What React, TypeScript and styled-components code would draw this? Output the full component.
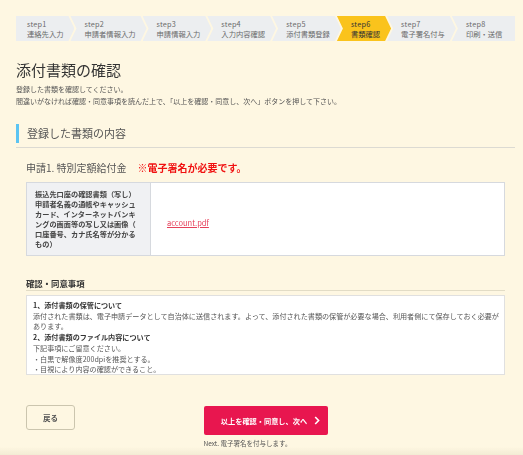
import React from 'react';
import styled, { createGlobalStyle } from 'styled-components';

const GlobalStyle = createGlobalStyle`
  html, body {
    margin: 0;
    padding: 0;
    background: #fef7e2;
  }
  body {
    font-family: "Noto Sans CJK JP", "Noto Sans", sans-serif;
    color: #555;
  }
  * {
    box-sizing: border-box;
  }
`;

type Step = { no: number; label: string };

const steps: Step[] = [
  { no: 1, label: '連絡先入力' },
  { no: 2, label: '申請者情報入力' },
  { no: 3, label: '申請情報入力' },
  { no: 4, label: '入力内容確認' },
  { no: 5, label: '添付書類登録' },
  { no: 6, label: '書類確認' },
  { no: 7, label: '電子署名付与' },
  { no: 8, label: '印刷・送信' },
];

const CURRENT_STEP = 6;

// 確認・同意事項の本文。heading は太字で表示する。
const agreement: { heading?: string; lines: string[] }[] = [
  {
    heading: '1、添付書類の保管について',
    lines: [
      '添付された書類は、電子申請データとして自治体に送信されます。よって、添付された書類の保管が必要な場合、利用者側にて保存しておく必要があります。',
    ],
  },
  {
    heading: '2、添付書類のファイル内容について',
    lines: [
      '下記事項にご留意ください。',
      '・白黒で解像度200dpiを推奨とする。',
      '・目視により内容の確認ができること。',
      '・ファイルの形式はPDF、JPEG、PNGのいずれかとする。',
      '・1ファイルあたりの容量は10MB以内とする。',
    ],
  },
  {
    heading: '3、電子署名について',
    lines: [
      '次の画面で、マイナンバーカードを用いて電子署名を付与します。',
      'カードリーダーまたは対応スマートフォンをご用意ください。',
      '署名用電子証明書の暗証番号（英数字6文字以上16文字以下）が必要です。',
    ],
  },
  {
    heading: '4、申請内容の変更について',
    lines: [
      '電子署名を付与した後は、申請内容および添付書類を変更することはできません。',
      '内容に誤りがある場合は、「戻る」ボタンで前の画面に戻り修正してください。',
    ],
  },
  {
    heading: '5、個人情報の取り扱いについて',
    lines: [
      '入力された個人情報は、給付金の支給事務以外の目的には使用しません。',
      '法令に基づく場合を除き、本人の同意なく第三者に提供することはありません。',
    ],
  },
];

export default function App() {
  return (
    <>
      <GlobalStyle />
      <Page>
        <StepBar>
          {steps.map((step, idx) => (
            <StepItem
              key={step.no}
              $first={idx === 0}
              $last={idx === steps.length - 1}
              $active={step.no === CURRENT_STEP}>
              <StepNo>step{step.no}</StepNo>
              <StepLabel>{step.label}</StepLabel>
            </StepItem>
          ))}
        </StepBar>

        <Title>添付書類の確認</Title>
        <Lead>
          登録した書類を確認してください。
          <br />
          間違いがなければ確認・同意事項を読んだ上で、「以上を確認・同意し、次へ」ボタンを押して下さい。
        </Lead>

        <SectionHead>
          <SectionTitle>登録した書類の内容</SectionTitle>
        </SectionHead>

        <Inner>
          <Application>
            申請1. 特別定額給付金
            <Required>※電子署名が必要です。</Required>
          </Application>

          <DocTable>
            <tbody>
              <tr>
                <DocName>
                  振込先口座の確認書類（写し）
                  <br />
                  申請者名義の通帳やキャッシュ
                  <br />
                  カード、インターネットバンキ
                  <br />
                  ングの画面等の写し又は画像（
                  <br />
                  口座番号、カナ氏名等が分かる
                  <br />
                  もの）
                </DocName>
                <DocFile>
                  <FileLink href="#">account.pdf</FileLink>
                </DocFile>
              </tr>
            </tbody>
          </DocTable>

          <AgreeHead>確認・同意事項</AgreeHead>
          <AgreeBox>
            {agreement.map((block, idx) => (
              <React.Fragment key={idx}>
                {block.heading && <AgreeTitle>{block.heading}</AgreeTitle>}
                {block.lines.map((line) => (
                  <AgreeLine key={line}>{line}</AgreeLine>
                ))}
              </React.Fragment>
            ))}
          </AgreeBox>

          <Actions>
            <BackButton type="button">戻る</BackButton>
            <NextColumn>
              <NextButton type="button">
                以上を確認・同意し、次へ
                <svg width="6" height="9" viewBox="0 0 6 9" aria-hidden>
                  <polyline
                    points="1.2,1 4.6,4.5 1.2,8"
                    fill="none"
                    stroke="#fff"
                    strokeWidth="1.6"
                  />
                </svg>
              </NextButton>
              <NextNote>Next. 電子署名を付与します。</NextNote>
            </NextColumn>
            <span />
          </Actions>
        </Inner>
      </Page>
      <BottomShade />
    </>
  );
}

const Page = styled.div`
  width: 499px;
  margin-left: 16px;
  padding-top: 16px;
  padding-bottom: 8px;
`;

const StepBar = styled.ol`
  display: flex;
  margin: 0;
  padding: 0;
  list-style: none;
  height: 25px;
`;

const StepItem = styled.li<{ $first: boolean; $last: boolean; $active: boolean }>`
  display: flex;
  flex-direction: column;
  justify-content: center;
  height: 25px;
  padding: 0 11px 0 ${({ $first }) => ($first ? '11px' : '14px')};
  margin-left: ${({ $first }) => ($first ? '0' : '-4px')};
  flex: ${({ $last }) => ($last ? '1' : 'none')};
  background: ${({ $active }) => ($active ? '#fac31c' : '#eceef0')};
  color: ${({ $active }) => ($active ? '#333' : '#6a6a6a')};
  clip-path: ${({ $first, $last }) =>
    $first
      ? 'polygon(0 0, calc(100% - 6px) 0, 100% 50%, calc(100% - 6px) 100%, 0 100%)'
      : $last
        ? 'polygon(0 0, 100% 0, 100% 100%, 0 100%, 6px 50%)'
        : 'polygon(0 0, calc(100% - 6px) 0, 100% 50%, calc(100% - 6px) 100%, 0 100%, 6px 50%)'};
`;

const StepNo = styled.span`
  font-size: 7.3px;
  line-height: 10px;
  letter-spacing: 0.2px;
`;

const StepLabel = styled.span`
  font-size: 7.3px;
  line-height: 10px;
  white-space: nowrap;
`;

const Title = styled.h1`
  margin: 19px 0 0;
  font-size: 15px;
  line-height: 20px;
  font-weight: 400;
  color: #333;
`;

const Lead = styled.p`
  margin: 4px 0 0;
  font-size: 7px;
  line-height: 11.5px;
  color: #555;
`;

const SectionHead = styled.div`
  margin-top: 17px;
  padding-bottom: 4px;
  border-bottom: 1px solid #dcdad2;
`;

const SectionTitle = styled.h2`
  margin: 0;
  padding-left: 8px;
  border-left: 3px solid #5cc4f2;
  font-size: 11px;
  line-height: 19px;
  font-weight: 400;
  color: #555;
`;

const Inner = styled.div`
  padding: 0 10px;
`;

const Application = styled.h3`
  display: flex;
  align-items: center;
  margin: 13px 0 0;
  font-size: 10px;
  line-height: 14px;
  font-weight: 400;
  color: #555;
`;

const Required = styled.span`
  margin-left: 11px;
  color: #f01010;
  font-weight: 700;
`;

const DocTable = styled.table`
  width: 100%;
  margin-top: 7px;
  border-collapse: collapse;
  background: #fff;
`;

const DocName = styled.th`
  width: 124px;
  padding: 6px 10px 6px 8px;
  border: 1px solid #d6d9de;
  background: #f0f1f3;
  text-align: left;
  font-size: 7.2px;
  line-height: 10px;
  font-weight: 700;
  color: #444;
  white-space: nowrap;
`;

const DocFile = styled.td`
  padding: 0 16px;
  border: 1px solid #d6d9de;
  vertical-align: middle;
`;

const FileLink = styled.a`
  font-size: 7.5px;
  color: #e6405a;
  text-decoration: underline;
`;

const AgreeHead = styled.h3`
  margin: 21px 0 0;
  padding-bottom: 1px;
  border-bottom: 1px solid #e2dcc6;
  font-size: 8.4px;
  line-height: 12px;
  font-weight: 700;
  color: #333;
`;

const AgreeBox = styled.div`
  height: 80px;
  margin-top: 4px;
  padding: 4px 0 6px 6px;
  border: 1px solid #e0e0e0;
  background: #fff;
  overflow-y: scroll;

  &::-webkit-scrollbar {
    width: 9px;
  }
  &::-webkit-scrollbar-track {
    background: #f6f6f6;
    border-left: 1px solid #ececec;
  }
  &::-webkit-scrollbar-thumb {
    background: #c2c2c2;
    border-radius: 4px;
    border: 2px solid #f6f6f6;
  }
`;

const AgreeTitle = styled.p`
  margin: 0;
  font-size: 7.1px;
  line-height: 10.7px;
  font-weight: 700;
  color: #333;
`;

const AgreeLine = styled.p`
  margin: 0;
  font-size: 7.1px;
  line-height: 10.7px;
  color: #555;
`;

const Actions = styled.div`
  display: grid;
  grid-template-columns: 1fr auto 1fr;
  align-items: start;
  margin-top: 30px;
`;

const BackButton = styled.button`
  justify-self: start;
  width: 49px;
  height: 25px;
  border: 1px solid #cbc5ae;
  border-radius: 3px;
  background: transparent;
  font-family: inherit;
  font-size: 7.5px;
  font-weight: 700;
  color: #555;
  cursor: pointer;
`;

const NextColumn = styled.div`
  display: flex;
  flex-direction: column;
  padding-top: 1px;
`;

const NextButton = styled.button`
  display: flex;
  align-items: center;
  justify-content: center;
  gap: 7px;
  width: 124px;
  height: 29px;
  padding: 0 0 0 10px;
  border: none;
  border-radius: 2px;
  background: #e8164f;
  font-family: inherit;
  font-size: 7.2px;
  font-weight: 700;
  color: #fff;
  cursor: pointer;
`;

const NextNote = styled.p`
  margin: 4px 0 0;
  font-size: 6.5px;
  line-height: 9px;
  color: #555;
`;

const BottomShade = styled.div`
  position: fixed;
  left: 0;
  right: 0;
  bottom: 0;
  height: 8px;
  background: linear-gradient(to bottom, rgba(230, 222, 196, 0), rgba(230, 222, 196, 0.45));
  pointer-events: none;
`;
